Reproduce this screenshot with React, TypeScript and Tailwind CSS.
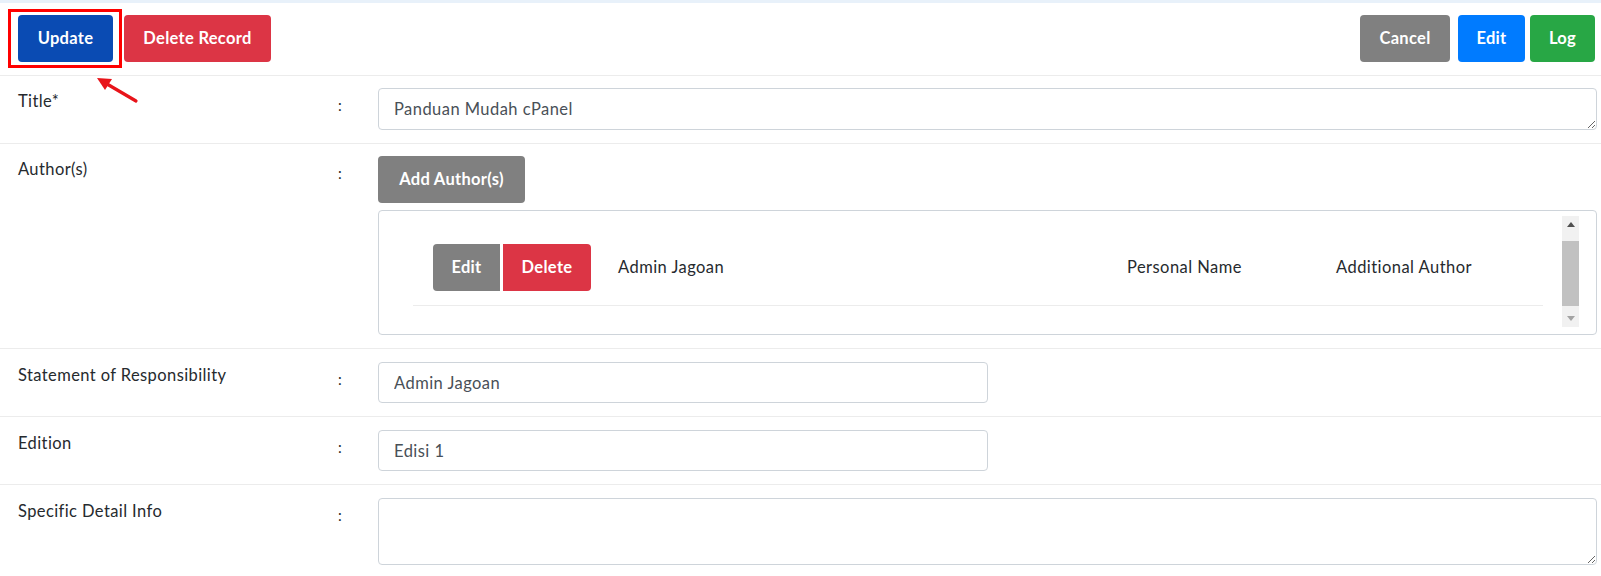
import React from "react"

const font = { fontFamily: "Lato, 'Noto Sans', sans-serif" }

function Row({ label, children, last, top = "pt-[13px]" }: { label: string; children: React.ReactNode; last?: boolean; top?: string }) {
  return (
    <div className={`flex ${top} pb-[13px] ${last ? "" : "border-b border-[#ececec]"}`}>
      <div className="w-[338px] shrink-0 pl-[18px] pt-[1px] text-[16.5px] tracking-[0.4px] text-[#262a2e]">{label}</div>
      <div className="w-[40px] shrink-0 pt-[6px] text-[15px] text-[#262a2e]">:</div>
      <div className="flex-1 pr-[4px]">{children}</div>
    </div>
  )
}

function TextInput({ value }: { value: string }) {
  return (
    <input
      readOnly
      value={value}
      className="h-[41px] w-[610px] rounded-[4px] border border-[#ced4da] bg-white px-[15px] text-[16.5px] tracking-[0.45px] text-[#495057] outline-none"
      style={font}
    />
  )
}

export default function App() {
  return (
    <div className="relative min-h-screen bg-white" style={font}>
      <div className="h-[3px] bg-[#e8f1fa]" />

      {/* toolbar */}
      <div className="flex items-center justify-between border-b border-[#ececec] pt-[12px] pb-[13px] pl-[18px] pr-[6px] text-[16.5px] font-bold tracking-[0.3px] text-white">
        <div className="flex gap-[11px]">
          <button className="h-[47px] w-[95px] rounded-[4px] bg-[#0a4bb3]">Update</button>
          <button className="h-[47px] w-[147px] rounded-[4px] bg-[#dc3545]">Delete Record</button>
        </div>
        <div className="flex">
          <button className="h-[47px] w-[90px] rounded-[4px] bg-[#808080]">Cancel</button>
          <button className="ml-[8px] h-[47px] w-[67px] rounded-[4px] bg-[#007bff]">Edit</button>
          <button className="ml-[5px] h-[47px] w-[65px] rounded-[4px] bg-[#28a745]">Log</button>
        </div>
      </div>

      <Row label="Title*" top="pt-[12px]">
        <textarea
          readOnly
          value="Panduan Mudah cPanel"
          className="block h-[42px] w-full rounded-[4px] border border-[#ced4da] px-[15px] py-[8px] text-[16.5px] tracking-[0.45px] text-[#495057] outline-none"
          style={font}
        />
      </Row>

      <Row label="Author(s)" top="pt-[12px]">
        <button className="h-[47px] w-[147px] rounded-[4px] bg-[#808080] text-[16.5px] font-bold tracking-[0.3px] text-white">
          Add Author(s)
        </button>
        <div className="mt-[7px] flex h-[125px] rounded-[4px] border border-[#ced4da]">
          <div className="flex-1 pl-[34px] pr-[19px] pt-[33px]">
            <div className="flex items-center border-b border-[#ececec] pb-[14px] pl-[20px] text-[16.5px] tracking-[0.45px] text-[#262a2e]">
              <div className="flex w-[185px] shrink-0 gap-[3px] tracking-[0.3px]">
                <button className="h-[47px] w-[67px] rounded-l-[4px] bg-[#808080] font-bold text-white">Edit</button>
                <button className="h-[47px] w-[88px] rounded-r-[4px] bg-[#dc3545] font-bold text-white">Delete</button>
              </div>
              <div className="w-[509px] shrink-0">Admin Jagoan</div>
              <div className="w-[209px] shrink-0">Personal Name</div>
              <div className="flex-1">Additional Author</div>
            </div>
          </div>
          {/* scrollbar */}
          <div className="mr-[17px] mt-[5px] mb-[7px] flex w-[17px] flex-col bg-[#f1f1f1]">
            <div className="flex h-[17px] items-center justify-center">
              <svg width="8" height="5" viewBox="0 0 8 5"><path d="M0 5 L4 0 L8 5 Z" fill="#505050" /></svg>
            </div>
            <div className="mt-[8px] h-[65px] bg-[#c1c1c1]" />
            <div className="flex-1" />
            <div className="flex h-[17px] items-center justify-center">
              <svg width="8" height="5" viewBox="0 0 8 5"><path d="M0 0 L8 0 L4 5 Z" fill="#a3a3a3" /></svg>
            </div>
          </div>
        </div>
      </Row>

      <Row label="Statement of Responsibility">
        <TextInput value="Admin Jagoan" />
      </Row>

      <Row label="Edition">
        <TextInput value="Edisi 1" />
      </Row>

      <Row label="Specific Detail Info" last>
        <textarea
          readOnly
          value=""
          className="block h-[67px] w-full rounded-[4px] border border-[#ced4da] px-[15px] py-[8px] text-[16.5px] text-[#495057] outline-none"
          style={font}
        />
      </Row>

      {/* annotation */}
      <div className="pointer-events-none absolute left-[8px] top-[9px] h-[59px] w-[114px] border-[3px] border-[#ff0000]" />
      <svg className="pointer-events-none absolute left-0 top-0" width="160" height="120" viewBox="0 0 160 120">
        <line x1="136" y1="101" x2="107" y2="84" stroke="#e8141a" strokeWidth="3.2" strokeLinecap="round" />
        <polygon points="97,78 112,79 105,90" fill="#e8141a" />
      </svg>
    </div>
  )
}
